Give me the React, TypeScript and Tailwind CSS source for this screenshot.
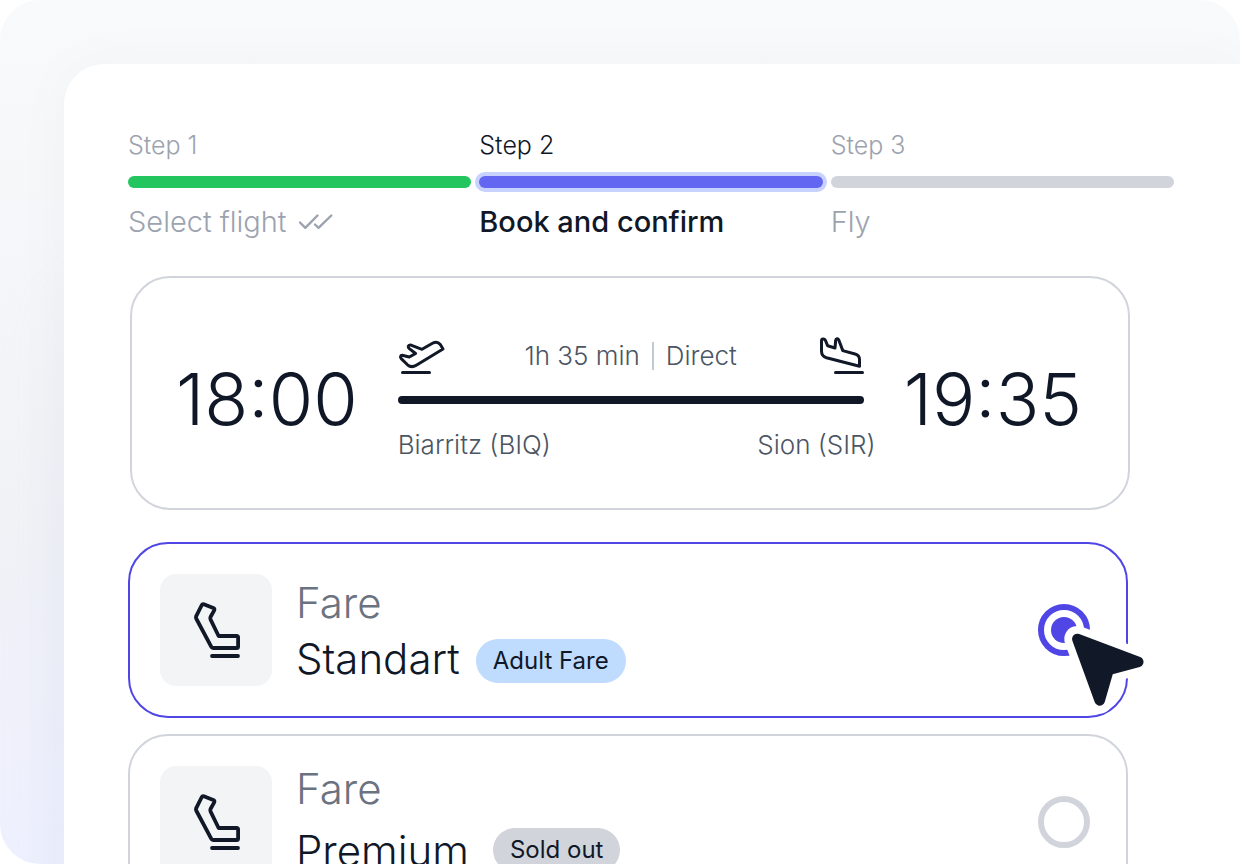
import { useState } from "react";

type Step = {
  label: string;
  title: string;
  state: "done" | "current" | "upcoming";
};

const steps: Step[] = [
  { label: "Step 1", title: "Select flight", state: "done" },
  { label: "Step 2", title: "Book and confirm", state: "current" },
  { label: "Step 3", title: "Fly", state: "upcoming" },
];

const barStyle = {
  done: "bg-[#22c55e]",
  current: "bg-[#6366f1] ring-4 ring-[#c7d2fe]",
  upcoming: "bg-[#d1d5db]",
};

function DoubleCheck() {
  return (
    <svg className="h-5 w-9 shrink-0" viewBox="0 0 36 20" fill="none" stroke="#9ca3af" strokeWidth="2.4" strokeLinecap="round" strokeLinejoin="round" aria-hidden="true">
      <path d="M2 10.500 7.300 15.800 19.500 3.500" />
      <path d="M17 12.500 20.500 15.800 33.300 3.500" />
    </svg>
  );
}

function TakeOffIcon() {
  return (
    <svg className="h-10 w-12" viewBox="0 0 48 40" fill="none" stroke="#111827" strokeWidth="3" strokeLinecap="round" strokeLinejoin="round" aria-hidden="true">
      <path d="M4.200 19.300 11.300 21 17.600 17.500 11.300 12.600C9.600 11.300 9.900 9 12.300 8.900L24 13.300 34.500 7.300C37.500 5.600 40.500 6.300 42.300 8.500L45 13 18.300 29.200C15 31.200 12 31 9.500 28.800L3.200 22.600C2 21.200 2.400 19.300 4.200 19.300Z" />
      <path d="M4.500 36.400H31.500" />
    </svg>
  );
}

function LandingIcon() {
  return (
    <svg className="h-10 w-12" viewBox="0 0 48 40" fill="none" stroke="#111827" strokeWidth="3" strokeLinecap="round" strokeLinejoin="round" aria-hidden="true">
      <path d="M5.500 5V15C5.500 18.500 7 20.700 10.500 21.700L43.500 30.300V23.500C43.500 20.500 42 18.800 39 18L26.800 14.600 22.800 4C22 2.200 19.800 2.500 19.700 4.500L19 12 11.600 9.800 9.500 4.500C8.300 2.200 5.500 2.500 5.500 5Z" />
      <path d="M19.500 36.400H46.500" />
    </svg>
  );
}

function SeatIcon() {
  return (
    <svg className="h-15 w-12 overflow-visible" viewBox="0 0 48 60" fill="none" stroke="#111827" strokeWidth="3.800" strokeLinecap="round" strokeLinejoin="round" aria-hidden="true">
      <path d="M11.800 4.200 21.300 8C22.400 8.500 22.700 9.300 22.200 10.300L18.500 17C18.100 17.800 18.100 18.600 18.500 19.400L26.600 36H44.500C45.500 36 46.100 36.600 46.100 37.600V46.400C46.100 47.400 45.500 48 44.500 48H21.300C20.300 48 19.700 47.700 19.200 46.700L4.200 18.500C3.800 17.700 3.800 17.200 4.100 16.400L9.800 5C10.300 4.100 10.900 3.900 11.800 4.200Z" />
      <path d="M20 56H46" />
    </svg>
  );
}

function Cursor() {
  return (
    <svg className="pointer-events-none absolute -right-7.5 top-19 h-25 w-24 overflow-visible" viewBox="0 0 96 100" strokeLinejoin="round" aria-hidden="true">
      <path d="M17.300 19 78.300 42 48.500 50 39.700 80.500Z" fill="#fff" stroke="#fff" strokeWidth="26" />
      <path d="M17.300 19 78.300 42 48.500 50 39.700 80.500Z" fill="#111827" stroke="#111827" strokeWidth="10.500" />
    </svg>
  );
}

function StepItem({ step }: { step: Step }) {
  const current = step.state === "current";
  return (
    <li aria-current={current ? "step" : undefined}>
      <p className={`text-[25px] leading-[34px] font-light ${current ? "text-gray-900" : "text-[#9ca3af]"}`}>{step.label}</p>
      <div className={`mt-3.5 h-3 rounded-full ${barStyle[step.state]}`} />
      <p className={`mt-4 flex items-center gap-3 text-[29px] leading-9 ${current ? "font-medium text-gray-900" : "font-light text-[#9ca3af]"}`}>
        {step.title}
        {step.state === "done" && <DoubleCheck />}
      </p>
    </li>
  );
}

type FareProps = {
  name: string;
  badge: string;
  badgeClass: string;
  textClass: string;
  checked: boolean;
  onSelect: () => void;
  pointer?: boolean;
};

function FareCard({ name, badge, badgeClass, textClass, checked, onSelect, pointer }: FareProps) {
  return (
    <label className={`relative flex h-44 items-center rounded-[40px] border-2 pl-[30px] pr-9 ${checked ? "border-[#4f46e5]" : "border-[#d1d5db]"}`}>
      <span className="flex size-28 shrink-0 items-center justify-center rounded-2xl bg-gray-100">
        <SeatIcon />
      </span>
      <span className={`ml-6 flex flex-1 flex-col ${textClass}`}>
        <span className="text-[42px] leading-12 font-light text-[#6b7280]">Fare</span>
        <span className="flex items-center">
          <span className="text-[42px] leading-12 font-light text-gray-900">{name}</span>
          <span className={`rounded-full px-[17px] py-1.5 text-2xl leading-8 text-gray-900 ${badgeClass}`}>{badge}</span>
        </span>
      </span>
      <input
        type="radio"
        name="fare"
        checked={checked}
        onChange={onSelect}
        className="size-[52px] shrink-0 appearance-none rounded-full border-[6px] border-[#d1d5db] bg-clip-content p-[7px] checked:border-[#4f46e5] checked:bg-[#4f46e5]"
      />
      {pointer && <Cursor />}
    </label>
  );
}

export default function App() {
  const [fare, setFare] = useState("Standart");
  return (
    <div className="h-screen overflow-hidden rounded-[40px] rounded-br-none bg-linear-to-b from-[#f9fafb] via-[#f1f2f6] via-60% to-[#eef0fe] pl-16 pt-16 font-['Inter',sans-serif]">
      <main className="min-h-full rounded-tl-[40px] bg-white pl-16 pt-16 shadow-[0_0_60px_rgba(17,24,39,0.03),-8px_220px_60px_rgba(199,220,254,0.12)]">
        <ol className="mr-[66px] grid grid-cols-3 gap-2">
          {steps.map((step) => (
            <StepItem key={step.label} step={step} />
          ))}
        </ol>

        <section className="ml-0.5 mr-[110px] mt-9 flex items-center justify-between rounded-[40px] border-2 border-[#d1d5db] pt-[58px] pb-[46px] pl-11 pr-[46px]">
          <time className="text-[72px] leading-20 font-light text-gray-900">18:00</time>
          <div className="flex w-[466px] flex-col">
            <div className="flex items-start justify-between">
              <TakeOffIcon />
              <p className="flex items-center gap-3 text-[26px] leading-10 font-light text-[#4b5563]">
                1h 35 min
                <span className="h-7 w-0.5 bg-[#c4c8cf]" />
                Direct
              </p>
              <LandingIcon />
            </div>
            <div className="mt-5 h-2 rounded-full bg-gray-900" />
            <div className="mt-6 -mr-3 flex justify-between text-[26px] leading-[34px] font-light text-[#4b5563]">
              <span>Biarritz (BIQ)</span>
              <span>Sion (SIR)</span>
            </div>
          </div>
          <time className="text-[72px] leading-20 font-light text-gray-900">19:35</time>
        </section>

        <div className="mr-28 mt-8 flex flex-col gap-4">
          <FareCard
            name="Standart"
            badge="Adult Fare"
            badgeClass="ml-4 mt-1 bg-[#bfdbfe]"
            textClass="gap-2 pt-0.5"
            checked={fare === "Standart"}
            onSelect={() => setFare("Standart")}
            pointer
          />
          <FareCard
            name="Premium"
            badge="Sold out"
            badgeClass="ml-6 mb-0.5 bg-[#d1d5db]"
            textClass="gap-3.5 pb-1"
            checked={fare === "Premium"}
            onSelect={() => setFare("Premium")}
          />
        </div>
      </main>
    </div>
  );
}
